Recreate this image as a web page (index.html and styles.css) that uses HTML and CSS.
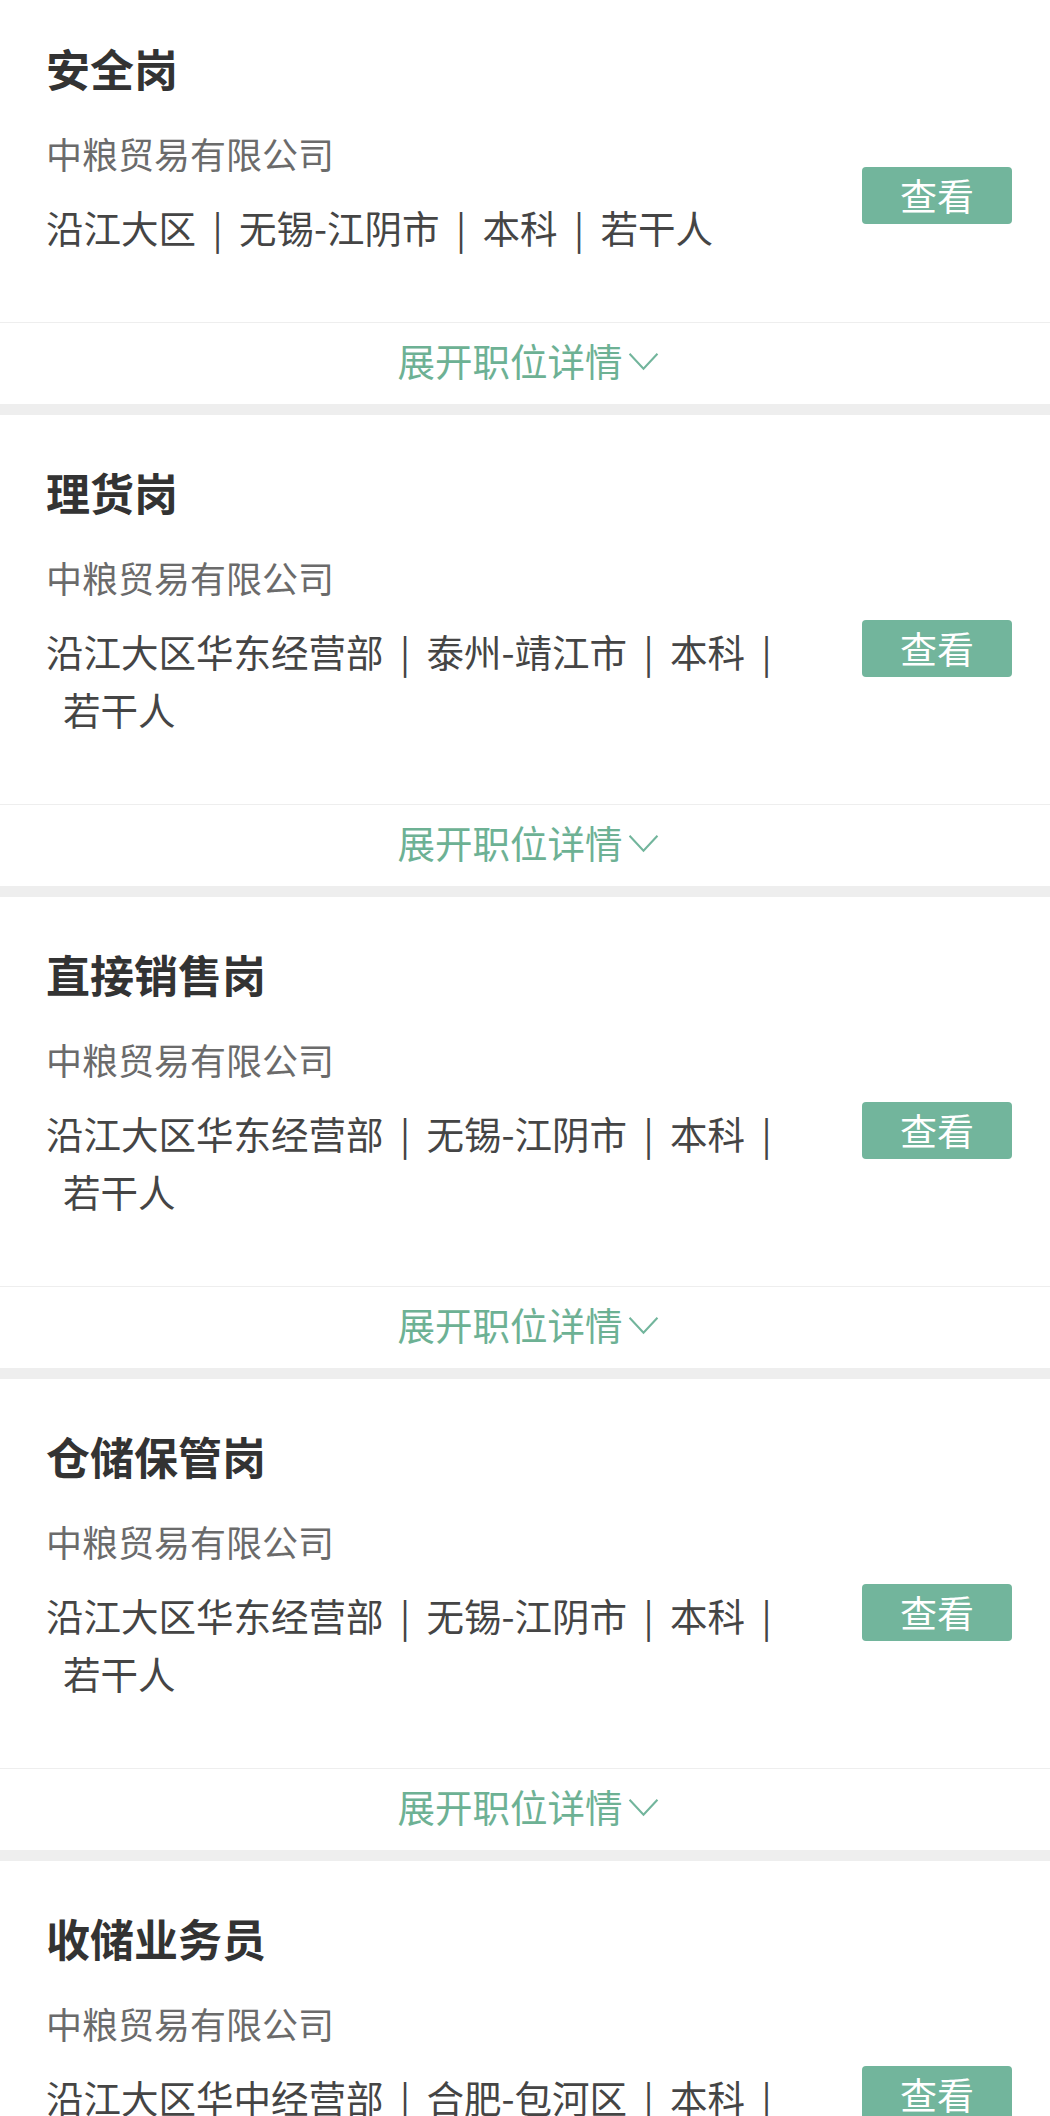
FILE: index.html
```html
<!DOCTYPE html>
<html lang="zh-CN">
<head>
<meta charset="utf-8">
<title>职位列表</title>
<link rel="stylesheet" href="styles.css">
</head>
<body>
<div class="list">
  <div class="card">
    <div class="card-main">
      <h2 class="title">安全岗</h2>
      <div class="row">
        <div class="info">
          <div class="company">中粮贸易有限公司</div>
          <div class="meta">沿江大区<span class="sep">|</span>无锡-江阴市<span class="sep">|</span>本科<span class="sep">|</span>若干人</div>
        </div>
        <button class="view">查看</button>
      </div>
    </div>
    <div class="expand">展开职位详情<svg class="chev" width="30" height="20" viewBox="0 0 30 20"><polyline points="1.5,2.5 15,17 28.5,2.5" fill="none" stroke="#72b59c" stroke-width="2"/></svg></div>
  </div>

  <div class="card">
    <div class="card-main">
      <h2 class="title">理货岗</h2>
      <div class="row">
        <div class="info">
          <div class="company">中粮贸易有限公司</div>
          <div class="meta">沿江大区华东经营部<span class="sep">|</span>泰州-靖江市<span class="sep">|</span>本科<span class="sep">|</span>若干人</div>
        </div>
        <button class="view">查看</button>
      </div>
    </div>
    <div class="expand">展开职位详情<svg class="chev" width="30" height="20" viewBox="0 0 30 20"><polyline points="1.5,2.5 15,17 28.5,2.5" fill="none" stroke="#72b59c" stroke-width="2"/></svg></div>
  </div>

  <div class="card">
    <div class="card-main">
      <h2 class="title">直接销售岗</h2>
      <div class="row">
        <div class="info">
          <div class="company">中粮贸易有限公司</div>
          <div class="meta">沿江大区华东经营部<span class="sep">|</span>无锡-江阴市<span class="sep">|</span>本科<span class="sep">|</span>若干人</div>
        </div>
        <button class="view">查看</button>
      </div>
    </div>
    <div class="expand">展开职位详情<svg class="chev" width="30" height="20" viewBox="0 0 30 20"><polyline points="1.5,2.5 15,17 28.5,2.5" fill="none" stroke="#72b59c" stroke-width="2"/></svg></div>
  </div>

  <div class="card">
    <div class="card-main">
      <h2 class="title">仓储保管岗</h2>
      <div class="row">
        <div class="info">
          <div class="company">中粮贸易有限公司</div>
          <div class="meta">沿江大区华东经营部<span class="sep">|</span>无锡-江阴市<span class="sep">|</span>本科<span class="sep">|</span>若干人</div>
        </div>
        <button class="view">查看</button>
      </div>
    </div>
    <div class="expand">展开职位详情<svg class="chev" width="30" height="20" viewBox="0 0 30 20"><polyline points="1.5,2.5 15,17 28.5,2.5" fill="none" stroke="#72b59c" stroke-width="2"/></svg></div>
  </div>

  <div class="card">
    <div class="card-main">
      <h2 class="title">收储业务员</h2>
      <div class="row">
        <div class="info">
          <div class="company">中粮贸易有限公司</div>
          <div class="meta">沿江大区华中经营部<span class="sep">|</span>合肥-包河区<span class="sep">|</span>本科<span class="sep">|</span>若干人</div>
        </div>
        <button class="view">查看</button>
      </div>
    </div>
    <div class="expand">展开职位详情<svg class="chev" width="30" height="20" viewBox="0 0 30 20"><polyline points="1.5,2.5 15,17 28.5,2.5" fill="none" stroke="#72b59c" stroke-width="2"/></svg></div>
  </div>
</div>
</body>
</html>
```

FILE: styles.css
```css
html, body {
  margin: 0;
  padding: 0;
  background: #eeeeee;
}
body {
  font-family: "Noto Sans CJK SC", "Noto Sans", sans-serif;
  overflow: hidden;
}
.list {
  margin-top: -9px;
  display: flex;
  flex-direction: column;
  gap: 11px;
}
.card {
  background: #ffffff;
}
.card-main {
  padding: 47px 38px 66px 46px;
}
.title {
  margin: 0;
  font-size: 44px;
  line-height: 60px;
  font-weight: 700;
  color: #333333;
}
.row {
  display: flex;
  align-items: center;
  gap: 62px;
  margin-top: 30px;
}
.info {
  flex: 1;
  min-width: 0;
}
.company {
  font-size: 36px;
  line-height: 50px;
  color: #6b6b6b;
}
.meta {
  margin-top: 20px;
  font-size: 37.5px;
  line-height: 58px;
  color: #454545;
  padding-left: 17px;
  text-indent: -17px;
}
.sep {
  display: inline-block;
  width: 43px;
  text-align: center;
  text-indent: 0;
}
.view {
  flex: none;
  width: 150px;
  height: 57px;
  margin-top: 7px;
  border: none;
  border-radius: 4px;
  background: #72b59c;
  color: #ffffff;
  font-family: "Noto Sans CJK SC", sans-serif;
  font-size: 37px;
  line-height: 57px;
  padding: 0;
}
.expand {
  border-top: 1px solid #eeeeee;
  height: 73px;
  box-sizing: content-box;
  display: flex;
  align-items: center;
  justify-content: center;
  padding: 0 0 8px 6px;
  font-size: 37.5px;
  color: #6db194;
}
.chev {
  margin-left: 5px;
  margin-top: 3px;
  width: 31px;
  height: 21px;
}
```
